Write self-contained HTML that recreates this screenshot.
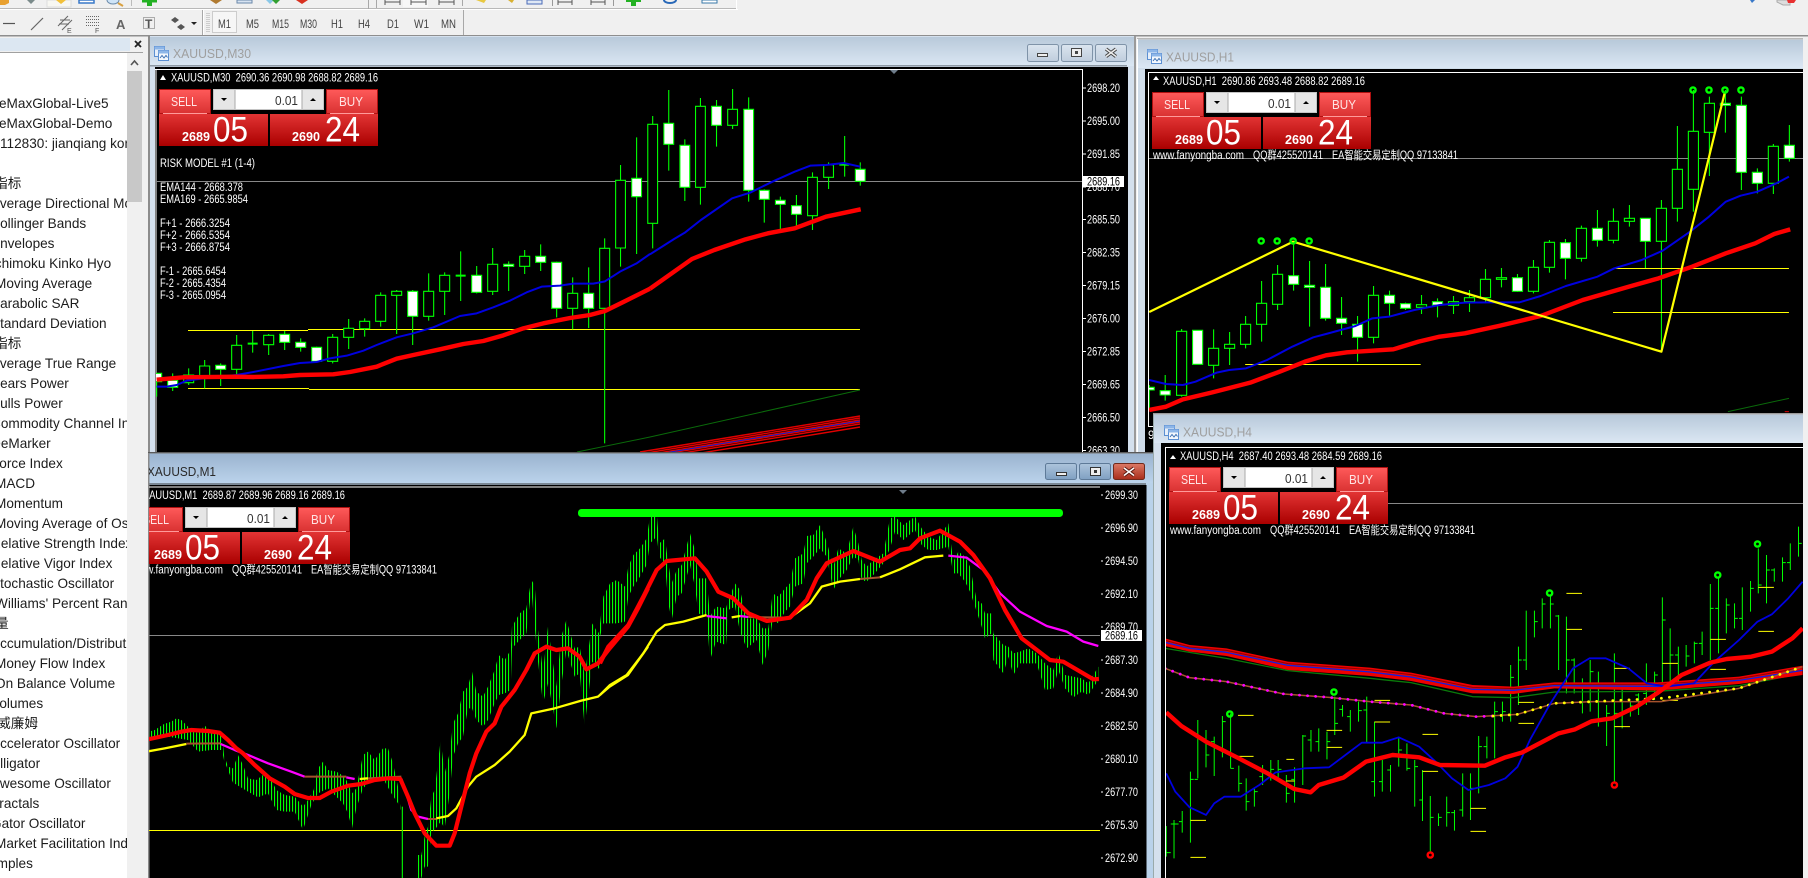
<!DOCTYPE html>
<html><head><meta charset="utf-8"><title>XAUUSD</title>
<style>
html,body{margin:0;padding:0;background:#f0f0f0;overflow:hidden;width:1808px;height:878px}
svg{display:block;font-family:"Liberation Sans","Noto Sans CJK SC",sans-serif}
path,polyline,line,rect,ellipse,polygon{vector-effect:non-scaling-stroke}
polyline{stroke-linejoin:round}
.l{font-size:13.6px;fill:#1c1c1c}
.a{font-size:11.5px;fill:#fff}
.h{font-size:11.5px;fill:#fff}
.t{font-size:13px;fill:#9f9f9f}
.tf{font-size:12px;fill:#444}
</style></head><body>
<svg width="1808" height="878" viewBox="0 0 1808 878" xmlns="http://www.w3.org/2000/svg">
<defs>
<linearGradient id="ti" x1="0" y1="0" x2="0" y2="1"><stop offset="0" stop-color="#b8c9da"/><stop offset="1" stop-color="#dbe7f3"/></linearGradient>
<linearGradient id="ta" x1="0" y1="0" x2="0" y2="1"><stop offset="0" stop-color="#9bb4d0"/><stop offset="1" stop-color="#bbd3eb"/></linearGradient>
<linearGradient id="rb" x1="0" y1="0" x2="0" y2="1"><stop offset="0" stop-color="#ff5a5a"/><stop offset="1" stop-color="#d93232"/></linearGradient>
<linearGradient id="rd" x1="0" y1="0" x2="0" y2="1"><stop offset="0" stop-color="#e23434"/><stop offset="1" stop-color="#aa0000"/></linearGradient>
<linearGradient id="bi" x1="0" y1="0" x2="0" y2="1"><stop offset="0" stop-color="#dbe5ef"/><stop offset="1" stop-color="#bfcddd"/></linearGradient>
<linearGradient id="ba" x1="0" y1="0" x2="0" y2="1"><stop offset="0" stop-color="#adc4dc"/><stop offset="1" stop-color="#7fa0c2"/></linearGradient>
<linearGradient id="bc" x1="0" y1="0" x2="0" y2="1"><stop offset="0" stop-color="#dc7a66"/><stop offset="1" stop-color="#a92d1b"/></linearGradient>
<pattern id="st" width="9" height="30" patternUnits="userSpaceOnUse"><rect width="3.3" height="30" fill="#0f0"/></pattern>
<clipPath id="cs"><rect x="0" y="53" width="127" height="825"/></clipPath>
<clipPath id="c30"><rect x="156" y="70" width="926" height="383"/></clipPath>
<clipPath id="ch1"><rect x="1149" y="73" width="654" height="340"/></clipPath>
<clipPath id="ch4"><rect x="1166" y="448" width="637" height="430"/></clipPath>
<clipPath id="cm1"><rect x="149" y="485" width="951" height="393"/></clipPath>
<clipPath id="cmt"><rect x="149" y="453" width="1000" height="425"/></clipPath>
<g id="pn">
<rect x=".5" y=".5" width="51" height="24" fill="url(#rb)" stroke="#b01010"/>
<path d="M4 24.5H48" stroke="#ff9a9a" fill="none"/>
<rect x="54.5" y=".5" width="110" height="20" fill="#e6e6e6" stroke="#c4c4c4"/>
<rect x="76" y="1" width="67" height="19" fill="#fff"/>
<path d="M76 1V20M143 1V20" stroke="#aaa" fill="none"/>
<path d="M62 9H68L65 12Z M151 12H157L154 9Z" fill="#000"/>
<rect x="167.500" y=".5" width="51" height="24" fill="url(#rb)" stroke="#b01010"/>
<path d="M171 24.5H215" stroke="#ff9a9a" fill="none"/>
<rect x="0" y="25" width="109" height="32" fill="url(#rd)"/>
<rect x="111" y="25" width="108" height="32" fill="url(#rd)"/>
</g>
<g id="ic">
<rect x=".5" y=".5" width="10" height="10" fill="#e6effa" stroke="#5b8fd2"/>
<rect x=".5" y=".5" width="10" height="3" fill="#8db6e8"/>
<rect x="4.500" y="4.500" width="10" height="10" fill="#f4f8fd" stroke="#5b8fd2"/>
<rect x="4.500" y="4.500" width="10" height="3" fill="#8db6e8"/>
<path d="M6 12L8 9.500L10 12L12 9.500L13.500 11.500" stroke="#3b6fb2" fill="none"/>
</g>
</defs>

<!-- background -->
<rect width="1808" height="878" fill="#f0f0f0"/>

<!-- toolbar row 1 (cut off) -->
<rect x="0" y="8" width="736" height="1" fill="#b8b8b8"/>
<rect x="0" y="9" width="738" height="1" fill="#fff"/>
<rect x="736" y="0" width="1" height="9" fill="#fff"/>
<path d="M0 0H9V3L5 5H0Z" fill="#e8a030"/>
<path d="M27 0H35L31 4Z" fill="#7a8a8a"/>
<rect x="47" y="0" width="24" height="7" fill="#f7f7f2" stroke="#ddd"/>
<path d="M56 0H66L61 4Z" fill="#f2c038"/>
<rect x="79" y="0" width="15" height="3" fill="#fff" stroke="#3878c8" stroke-width="1.500"/>
<ellipse cx="113" cy="0" rx="6" ry="4" fill="#cfe4f7" stroke="#6a8aaa"/>
<path d="M118 3L123 6" stroke="#d8a040" stroke-width="2" fill="none"/>
<rect x="131" y="0" width="1" height="6" fill="#bbb"/>
<rect x="147" y="0" width="5" height="6" fill="#23b123"/><rect x="142" y="0" width="15" height="2.500" fill="#23b123"/>
<path d="M210 0H222L216 4Z" fill="#b07a30"/>
<rect x="237" y="0" width="15" height="3" fill="#d8e4f2" stroke="#6a88aa"/>
<path d="M266 0H274L270 4Z" fill="#8ac8e8"/><path d="M272 0H280L276 4Z" fill="#32a032"/>
<path d="M296 0H308L302 4Z" fill="#d83020"/>
<rect x="368" y="0" width="1" height="9" fill="#a8a8a8"/>
<rect x="376" y="0" width="1" height="8" fill="#a8a8a8"/>
<path d="M385 2H400M385 0V5M400 0V5" stroke="#555" fill="none"/>
<rect x="403" y="0" width="25" height="7" fill="#f7f7f7"/>
<path d="M411 2H426M411 0V5M426 0V5M439 2H454M439 0V5M454 0V5" stroke="#555" fill="none"/>
<rect x="462" y="0" width="1" height="6" fill="#a8a8a8"/>
<path d="M476 0H486L484 3Z" fill="#e8c840"/>
<path d="M508 0H514L512 3Z" fill="#d8b030"/>
<rect x="527" y="0" width="15" height="4" fill="#dfe8f5" stroke="#4a6ab8"/>
<rect x="552" y="0" width="1" height="6" fill="#999"/>
<path d="M558 2H572M558 0V5M572 0V5M591 2H605M591 0V5M605 0V5" stroke="#555" fill="none"/>
<rect x="613" y="0" width="1" height="6" fill="#999"/>
<rect x="631" y="0" width="5" height="6" fill="#23b123"/><rect x="626" y="0" width="15" height="2" fill="#23b123"/>
<ellipse cx="670" cy="0" rx="6" ry="3" fill="none" stroke="#2868b8" stroke-width="2"/>
<rect x="702" y="0" width="15" height="3" fill="#fff" stroke="#3878a8"/>
<path d="M1750 0H1755L1752 3Z" fill="#3878c8"/>
<path d="M1777 2L1783 5H1790V0H1777Z" fill="#ddd" stroke="#aaa"/>
<path d="M1787 0H1796L1794 3H1788Z" fill="#e83030"/>

<!-- toolbar row 2 -->
<path d="M3 23.500H15" stroke="#555" stroke-width="1.200" fill="none"/>
<path d="M31 30L43 18" stroke="#666" stroke-width="1.200" fill="none"/>
<path d="M58 26L68 16M62 30L72 20M60 20H70M59 24H69" stroke="#666" fill="none"/>
<text x="67" y="33" font-size="7" fill="#555">E</text>
<path d="M86 16.500H100M86 19.500H100M86 22.500H100M86 25.500H100" stroke="#666" stroke-dasharray="1 1" fill="none"/>
<text x="95" y="33" font-size="7" fill="#555">F</text>
<text x="116" y="29" font-size="13" font-weight="bold" fill="#666">A</text>
<rect x="143.500" y="17.500" width="11" height="11" fill="none" stroke="#666" stroke-dasharray="1 1"/>
<text x="145" y="28" font-size="12" font-weight="bold" fill="#555">T</text>
<path d="M171 20L175 17L179 20L175 23ZM177 27L181 24L185 27L181 30Z" fill="#555"/>
<path d="M191 22H197L194 25Z" fill="#222"/>
<rect x="202" y="10" width="1" height="25" fill="#a8a8a8"/>
<rect x="203" y="10" width="1" height="25" fill="#fff"/>
<path d="M207 13V32M209 13V32" stroke="#aaa" stroke-dasharray="1 1" fill="none"/>
<rect x="212.500" y="11.500" width="24" height="21" fill="#f6f6f6" stroke="#ccc"/>
<text class="tf" x="218" y="28" textLength="13" lengthAdjust="spacingAndGlyphs">M1</text>
<text class="tf" x="246" y="28" textLength="13" lengthAdjust="spacingAndGlyphs">M5</text>
<text class="tf" x="272" y="28" textLength="17" lengthAdjust="spacingAndGlyphs">M15</text>
<text class="tf" x="300" y="28" textLength="17" lengthAdjust="spacingAndGlyphs">M30</text>
<text class="tf" x="331" y="28" textLength="12" lengthAdjust="spacingAndGlyphs">H1</text>
<text class="tf" x="358" y="28" textLength="12" lengthAdjust="spacingAndGlyphs">H4</text>
<text class="tf" x="387" y="28" textLength="12" lengthAdjust="spacingAndGlyphs">D1</text>
<text class="tf" x="414" y="28" textLength="15" lengthAdjust="spacingAndGlyphs">W1</text>
<text class="tf" x="441" y="28" textLength="15" lengthAdjust="spacingAndGlyphs">MN</text>
<rect x="463" y="10" width="1" height="25" fill="#a8a8a8"/>

<rect x="0" y="35" width="1808" height="1.500" fill="#8e8e8e"/>

<!-- navigator -->
<rect x="0" y="38" width="130" height="13" fill="#dce7f2"/>
<rect x="0" y="52" width="143" height="1" fill="#a0a0a0"/>
<path d="M135 41L141 47M141 41L135 47" stroke="#222" stroke-width="1.800" fill="none"/>
<rect x="0" y="53" width="127" height="825" fill="#fff"/>
<rect x="127" y="53" width="16" height="825" fill="#f0f0f0"/>
<rect x="127" y="71" width="15" height="131" fill="#c8c8c8"/>
<path d="M131 65L134.500 61L138 65" stroke="#555" stroke-width="1.600" fill="none"/>
<g clip-path="url(#cs)">
<text class="l" x="-1" y="108">eMaxGlobal-Live5</text>
<text class="l" x="-1" y="128">eMaxGlobal-Demo</text>
<text class="l" x="0" y="148">112830: jianqiang kong</text>
<text class="l" x="-33" y="188">趋势指标</text>
<text class="l" x="-9" y="208">Average Directional Movement</text>
<text class="l" x="-9" y="228">Bollinger Bands</text>
<text class="l" x="-9" y="248">Envelopes</text>
<text class="l" x="-9" y="268">Ichimoku Kinko Hyo</text>
<text class="l" x="-5" y="288">Moving Average</text>
<text class="l" x="-9" y="308">Parabolic SAR</text>
<text class="l" x="-9" y="328">Standard Deviation</text>
<text class="l" x="-33" y="348">震荡指标</text>
<text class="l" x="-9" y="368">Average True Range</text>
<text class="l" x="-9" y="388">Bears Power</text>
<text class="l" x="-9" y="408">Bulls Power</text>
<text class="l" x="-9" y="428">Commodity Channel Index</text>
<text class="l" x="-9" y="448">DeMarker</text>
<text class="l" x="-9" y="468">Force Index</text>
<text class="l" x="-5" y="488">MACD</text>
<text class="l" x="-5" y="508">Momentum</text>
<text class="l" x="-5" y="528">Moving Average of Oscillator</text>
<text class="l" x="-9" y="548">Relative Strength Index</text>
<text class="l" x="-9" y="568">Relative Vigor Index</text>
<text class="l" x="-9" y="588">Stochastic Oscillator</text>
<text class="l" x="-5" y="608">Williams' Percent Range</text>
<text class="l" x="-32" y="628">成交量</text>
<text class="l" x="-9" y="648">Accumulation/Distribution</text>
<text class="l" x="-5" y="668">Money Flow Index</text>
<text class="l" x="-5" y="688">On Balance Volume</text>
<text class="l" x="-9" y="708">Volumes</text>
<text class="l" x="-30" y="728">比尔威廉姆</text>
<text class="l" x="-9" y="748">Accelerator Oscillator</text>
<text class="l" x="-9" y="768">Alligator</text>
<text class="l" x="-9" y="788">Awesome Oscillator</text>
<text class="l" x="-9" y="808">Fractals</text>
<text class="l" x="-9" y="828">Gator Oscillator</text>
<text class="l" x="-5" y="848">Market Facilitation Index</text>
<text class="l" x="-20" y="868">Samples</text>
</g>

<!-- M30 window -->
<rect x="148" y="36" width="988" height="417" fill="#d4e0ed"/>
<rect x="148" y="36" width="2" height="417" fill="#8c8c8c"/>
<rect x="150" y="37" width="984" height="29" fill="url(#ti)"/>
<rect x="150" y="65" width="977" height="1.500" fill="#8e99a4"/>
<rect x="1134" y="36" width="2" height="417" fill="#9a9a9a"/>
<use href="#ic" x="154" y="46"/>
<text class="t" x="173" y="58" textLength="78" lengthAdjust="spacingAndGlyphs">XAUUSD,M30</text>
<rect x="1027.500" y="44.500" width="31" height="17" rx="2" fill="url(#bi)" stroke="#7f93a8"/>
<rect x="1061.500" y="44.500" width="31" height="17" rx="2" fill="url(#bi)" stroke="#7f93a8"/>
<rect x="1095.500" y="44.500" width="31" height="17" rx="2" fill="url(#bi)" stroke="#7f93a8"/>
<rect x="1037.500" y="53.500" width="10" height="3" fill="#eee" stroke="#444"/>
<rect x="1071.500" y="48.500" width="10" height="8" fill="#eee" stroke="#444"/><rect x="1075" y="51" width="3" height="3" fill="#444"/>
<path d="M1106 49L1116 56.500M1116 49L1106 56.500" stroke="#444" stroke-width="3.500" fill="none"/>
<path d="M1106 49L1116 56.500M1116 49L1106 56.500" stroke="#eee" stroke-width="1.500" fill="none"/>
<rect x="155" y="67" width="973" height="386" fill="#000"/>
<rect x="155" y="69" width="927.500" height="1" fill="#fff"/>
<rect x="155.500" y="69" width="1" height="384" fill="#fff"/>
<rect x="1082" y="69" width="1" height="384" fill="#fff"/>
<path d="M890 70H898L894 74Z" fill="#6e7c8a"/>
<path d="M156 181.500H1082" stroke="#888" fill="none"/>

<g clip-path="url(#c30)">
<path d="M188 330.500H308M308 329.500H860M188 388.500H309M309 389.500H860" stroke="#ff0" fill="none"/>
<path d="M577 452L650 437L860 390" stroke="#0a6a0a" fill="none"/>
<path d="M640 452L860 416M640 454L860 418M640 456L860 420M640 458L860 422M640 460L860 424M640 463L860 427" stroke="#e00000" stroke-width="1.400" fill="none"/>
<path d="M640 457L860 421" stroke="#1020d0" fill="none"/>
<g transform="translate(150,230) scale(.33333)">
<path d="M20 430V500M68 430V483M116 415V465M164 390V475M212 400V468M260 315V435M308 303V368M356 312V375M404 303V360M452 325V365M500 350V395M548 312V400M596 267V357M644 265V320M692 187V290M740 180V312M788 180V345M836 130V272M884 127V255M932 64V213M980 108V190M1028 54V195M1076 94V183M1124 60V132M1172 43V123M1220 95V262M1268 142V298M1316 112V294M1364 25V640" stroke="#0f0" stroke-width="1.100" fill="none"/>
<path d="M101 435H131V458H101ZM149 408H179V440H149ZM245 346H275V418H245ZM341 316H371V344H341ZM533 322H563V394H533ZM581 295H611V322H581ZM629 274H659V296H629ZM677 196H707V274H677ZM725 184H755V196H725ZM821 184H851V259H821ZM869 136H899V184H869ZM1013 103H1043V184H1013ZM1109 79H1139V109H1109ZM1253 190H1283V235H1253ZM1349 55H1379V235H1349Z" fill="#000" stroke="#0f0" stroke-width="1.100"/>
<path d="M5 430H35V455H5ZM53 451H83V472H53ZM197 406H227V418H197ZM389 313H419V337H389ZM437 337H467V352H437ZM485 352H515V394H485ZM773 184H803V259H773ZM965 136H995V187H965ZM1061 103H1091V109H1061ZM1157 79H1187V97H1157ZM1205 97H1235V235H1205ZM1301 190H1331V235H1301Z" fill="#fff" stroke="#0f0" stroke-width="1.100"/>
<path d="M293 341H323M917 137H947" stroke="#0f0" stroke-width="2" fill="none"/>
<polyline fill="none" stroke="#0000e0" stroke-width="2" points="20,470 50,470 80,465 110,452 160,445 260,435 310,426 400,408 450,399 500,396 540,385 590,377 640,362 680,345 740,322 790,310 850,292 930,258 980,250 1030,232 1080,212 1130,187 1175,170 1230,167 1270,161 1330,161 1365,154 1410,125 1460,100 1500,72"/>
<polyline fill="none" stroke="#f00" stroke-width="4.400" points="20,449 100,442 260,440 310,441 400,439 450,435 550,433 600,426 680,410 740,386 790,375 870,358 940,342 1000,333 1060,316 1120,295 1180,280 1260,264 1320,255 1365,243 1420,216 1500,176"/>
</g>
<g transform="translate(500,0) scale(.44643,.33333)">
<path d="M270 495V800M306 412V762M342 348V745M378 270V512M414 418V603M449 294V614M485 300V440M521 267V387M557 292V605M592 568V668M628 590V688M664 585V680M700 517V690M736 487V567M772 408V530M807 487V557" stroke="#0f0" stroke-width="1.100" fill="none"/>
<path d="M259 541H281V744H259ZM331 373H353V670H331ZM438 319H460V562H438ZM510 328H532V376H510ZM689 532H711V647H689ZM725 495H747V532H725Z" fill="#000" stroke="#0f0" stroke-width="1.100"/>
<path d="M295 535H317V590H295ZM367 370H389V433H367ZM403 436H425V562H403ZM474 319H496V376H474ZM546 328H568V571H546ZM581 571H603V598H581ZM617 601H639V613H617ZM653 617H675V643H653ZM796 508H818V544H796Z" fill="#fff" stroke="#0f0" stroke-width="1.100"/>
<path d="M760 494H782" stroke="#0f0" stroke-width="2" fill="none"/>
<polyline fill="none" stroke="#0000e0" stroke-width="2" points="336,763 390,717 415,697 450,660 520,595 560,578 615,542 660,515 695,497 730,495 770,489 807,500"/>
<polyline fill="none" stroke="#f00" stroke-width="4.400" points="336,866 430,777 480,750 550,718 600,700 660,685 730,650 808,628"/>
</g>
</g>

<path d="M160 80H166L163 75Z" fill="#fff"/>
<text class="h" x="171" y="81.500" textLength="207" lengthAdjust="spacingAndGlyphs" xml:space="preserve">XAUUSD,M30  2690.36 2690.98 2688.82 2689.16</text>
<use href="#pn" x="159" y="89"/>
<g transform="translate(159,89)" fill="#fff">
<text x="12" y="17" font-size="12.500" fill="#ffe4e4" textLength="26" lengthAdjust="spacingAndGlyphs">SELL</text>
<text x="116" y="16" font-size="13" fill="#333" textLength="23" lengthAdjust="spacingAndGlyphs">0.01</text>
<text x="180" y="17" font-size="12.500" fill="#ffe4e4" textLength="24" lengthAdjust="spacingAndGlyphs">BUY</text>
<text x="23" y="52" font-size="13" font-weight="bold" textLength="28" lengthAdjust="spacingAndGlyphs">2689</text>
<text x="54" y="52.500" font-size="35" textLength="35" lengthAdjust="spacingAndGlyphs">05</text>
<text x="133" y="52" font-size="13" font-weight="bold" textLength="28" lengthAdjust="spacingAndGlyphs">2690</text>
<text x="166" y="52.500" font-size="35" textLength="35" lengthAdjust="spacingAndGlyphs">24</text>
</g>
<text class="h" x="160" y="167" textLength="95" lengthAdjust="spacingAndGlyphs">RISK MODEL #1 (1-4)</text>
<text class="h" x="160" y="191" textLength="83" lengthAdjust="spacingAndGlyphs">EMA144 - 2668.378</text>
<text class="h" x="160" y="203" textLength="88" lengthAdjust="spacingAndGlyphs">EMA169 - 2665.9854</text>
<text class="h" x="160" y="227" textLength="70" lengthAdjust="spacingAndGlyphs">F+1 - 2666.3254</text>
<text class="h" x="160" y="239" textLength="70" lengthAdjust="spacingAndGlyphs">F+2 - 2666.5354</text>
<text class="h" x="160" y="251" textLength="70" lengthAdjust="spacingAndGlyphs">F+3 - 2666.8754</text>
<text class="h" x="160" y="275" textLength="66" lengthAdjust="spacingAndGlyphs">F-1 - 2665.6454</text>
<text class="h" x="160" y="287" textLength="66" lengthAdjust="spacingAndGlyphs">F-2 - 2665.4354</text>
<text class="h" x="160" y="299" textLength="66" lengthAdjust="spacingAndGlyphs">F-3 - 2665.0954</text>

<path d="M1083 88H1086M1083 121H1086M1083 154H1086M1083 187H1086M1083 219.500H1086M1083 252.500H1086M1083 285.500H1086M1083 318.500H1086M1083 351.500H1086M1083 384.500H1086M1083 417.500H1086M1083 450.500H1086" stroke="#fff" fill="none"/>
<text class="a" x="1087" y="92" textLength="33" lengthAdjust="spacingAndGlyphs">2698.20</text>
<text class="a" x="1087" y="125" textLength="33" lengthAdjust="spacingAndGlyphs">2695.00</text>
<text class="a" x="1087" y="158" textLength="33" lengthAdjust="spacingAndGlyphs">2691.85</text>
<text class="a" x="1087" y="191" textLength="33" lengthAdjust="spacingAndGlyphs">2688.70</text>
<text class="a" x="1087" y="223.500" textLength="33" lengthAdjust="spacingAndGlyphs">2685.50</text>
<text class="a" x="1087" y="256.500" textLength="33" lengthAdjust="spacingAndGlyphs">2682.35</text>
<text class="a" x="1087" y="289.500" textLength="33" lengthAdjust="spacingAndGlyphs">2679.15</text>
<text class="a" x="1087" y="322.500" textLength="33" lengthAdjust="spacingAndGlyphs">2676.00</text>
<text class="a" x="1087" y="355.500" textLength="33" lengthAdjust="spacingAndGlyphs">2672.85</text>
<text class="a" x="1087" y="388.500" textLength="33" lengthAdjust="spacingAndGlyphs">2669.65</text>
<text class="a" x="1087" y="421.500" textLength="33" lengthAdjust="spacingAndGlyphs">2666.50</text>
<text class="a" x="1087" y="454.500" textLength="33" lengthAdjust="spacingAndGlyphs">2663.30</text>
<rect x="1083" y="176" width="41" height="11" fill="#fff"/>
<text x="1087" y="185.500" font-size="11.500" fill="#000" textLength="33" lengthAdjust="spacingAndGlyphs">2689.16</text>

<!-- H1 window -->
<rect x="1137" y="38" width="666" height="415" fill="#cfdce9"/>
<rect x="1137" y="38" width="666" height="1.500" fill="#b8b8b8"/>
<rect x="1137" y="39" width="1" height="414" fill="#fff"/>
<rect x="1138" y="40" width="665" height="28" fill="url(#ti)"/>
<use href="#ic" x="1147" y="49"/>
<text class="t" x="1166" y="61.500" textLength="68" lengthAdjust="spacingAndGlyphs">XAUUSD,H1</text>
<rect x="1145" y="69" width="658" height="384" fill="#000"/>
<rect x="1148" y="72" width="655" height="1" fill="#fff"/>
<rect x="1148" y="72" width="1" height="354" fill="#fff"/>
<rect x="1148" y="426" width="6" height="1" fill="#fff"/>
<text class="h" x="1148" y="439">9</text>
<path d="M1149 158.500H1803" stroke="#888" fill="none"/>
<g clip-path="url(#ch1)">
<g transform="translate(1145,80) scale(.42088,.33333)">
<path d="M10 915V990M48 885V962M87 747V950M163 748V895M201 756V855M239 708V805M277 603V785M315 555V690M353 490V632M391 543V740M429 552V722M467 651V765M505 708V845M543 618V790M581 632V707M619 668V690M657 645V702M695 655V712M733 648V702M771 630V696M809 567V665M847 564V622M885 582V636M923 540V640M961 480V578M999 477V598M1037 437V545M1075 390V500M1113 385V490M1151 375V440M1189 415V565M1227 360V815M1265 138V425M1303 30V395M1341 50V288M1379 30V158M1417 50V330M1455 265V340M1493 192V342M1531 135V245" stroke="#0f0" stroke-width="1.100" fill="none"/>
<path d="M75 754H99V946H75ZM151 805H175V856H151ZM189 793H213V805H189ZM227 733H251V793H227ZM265 670H289V733H265ZM303 583H327V673H303ZM531 646H555V772H531ZM645 674H669V682H645ZM721 665H745V676H721ZM759 653H783V665H759ZM797 598H821V653H797ZM835 593H859V598H835ZM911 562H935V634H911ZM949 487H973V562H949ZM1025 445H1049V535H1025ZM1101 424H1125V481H1101ZM1139 415H1163V424H1139ZM1215 385H1239V484H1215ZM1253 268H1277V385H1253ZM1291 154H1315V328H1291ZM1329 70H1353V157H1329ZM1481 199H1505V310H1481Z" fill="#000" stroke="#0f0" stroke-width="1.100"/>
<path d="M-2 922H22V930H-2ZM36 932H60V945H36ZM113 751H137V853H113ZM341 587H365V613H341ZM379 616H403V622H379ZM417 622H441V715H417ZM455 715H479V730H455ZM493 733H517V772H493ZM569 646H593V670H569ZM607 671H631V685H607ZM683 665H707V675H683ZM873 593H897V634H873ZM987 488H1011V535H987ZM1063 445H1087V481H1063ZM1177 415H1201V484H1177ZM1367 70H1391V76H1367ZM1405 76H1429V277H1405ZM1443 277H1467V310H1443ZM1519 196H1543V235H1519Z" fill="#fff" stroke="#0f0" stroke-width="1.100"/>
<path d="M238 853.500H655M1112 565.500H1530M1112 697.500H1530" stroke="#ff0" stroke-width="1" fill="none"/>
<path d="M1385 995L1530 955" stroke="#0a6a0a" fill="none"/>
<path d="M1520 995H1530" stroke="#d00" fill="none"/>
<polyline fill="none" stroke="#0000e0" stroke-width="2" points="10,900 50,912 90,915 120,905 170,878 200,870 240,865 290,840 350,800 400,772 430,762 500,738 540,715 580,710 640,690 700,675 760,668 820,667 890,667 940,648 1000,618 1075,590 1115,565 1180,540 1230,512 1295,455 1340,410 1380,365 1415,347 1455,335 1500,310 1530,290"/>
<polyline fill="none" stroke="#f00" stroke-width="4.400" points="10,990 50,980 90,958 160,937 250,908 320,875 380,845 430,826 480,817 590,808 650,785 700,770 760,760 840,738 940,708 1040,660 1150,620 1220,595 1300,560 1380,520 1450,490 1495,462 1533,448"/>
<polyline fill="none" stroke="#ff0" stroke-width="2.200" points="10,696 352,485 1227,815 1378,35"/>
<g fill="none" stroke="#0f0" stroke-width="2.400">
<ellipse cx="276" cy="483" rx="6.200" ry="7.800"/><ellipse cx="314" cy="483" rx="6.200" ry="7.800"/><ellipse cx="352" cy="483" rx="6.200" ry="7.800"/><ellipse cx="390" cy="483" rx="6.200" ry="7.800"/>
<ellipse cx="1302" cy="30" rx="6.200" ry="7.800"/><ellipse cx="1340" cy="30" rx="6.200" ry="7.800"/><ellipse cx="1378" cy="30" rx="6.200" ry="7.800"/><ellipse cx="1416" cy="30" rx="6.200" ry="7.800"/>
</g>
</g>
</g>
<path d="M1153 80H1159L1156 76Z" fill="#fff"/>
<text class="h" x="1163" y="85" textLength="202" lengthAdjust="spacingAndGlyphs" xml:space="preserve">XAUUSD,H1  2690.86 2693.48 2688.82 2689.16</text>
<use href="#pn" x="1152" y="92"/>
<g transform="translate(1152,92)" fill="#fff">
<text x="12" y="17" font-size="12.500" fill="#ffe4e4" textLength="26" lengthAdjust="spacingAndGlyphs">SELL</text>
<text x="116" y="16" font-size="13" fill="#333" textLength="23" lengthAdjust="spacingAndGlyphs">0.01</text>
<text x="180" y="17" font-size="12.500" fill="#ffe4e4" textLength="24" lengthAdjust="spacingAndGlyphs">BUY</text>
<text x="23" y="52" font-size="13" font-weight="bold" textLength="28" lengthAdjust="spacingAndGlyphs">2689</text>
<text x="54" y="52.500" font-size="35" textLength="35" lengthAdjust="spacingAndGlyphs">05</text>
<text x="133" y="52" font-size="13" font-weight="bold" textLength="28" lengthAdjust="spacingAndGlyphs">2690</text>
<text x="166" y="52.500" font-size="35" textLength="35" lengthAdjust="spacingAndGlyphs">24</text>
</g>
<text class="h" x="1153" y="159" textLength="91" lengthAdjust="spacingAndGlyphs">www.fanyongba.com</text>
<text class="h" x="1253" y="159" textLength="70" lengthAdjust="spacingAndGlyphs">QQ群425520141</text>
<text class="h" x="1332" y="159" textLength="126" lengthAdjust="spacingAndGlyphs">EA智能交易定制QQ 97133841</text>

<!-- H4 window -->
<rect x="1153" y="413" width="650" height="465" fill="#d4e0ed"/>
<rect x="1153" y="413" width="650" height="1.500" fill="#9a9a9a"/>
<rect x="1154" y="415" width="649" height="28" fill="url(#ti)"/>
<rect x="1153" y="414" width="1" height="464" fill="#9aa"/>
<use href="#ic" x="1164" y="425"/>
<text class="t" x="1183" y="436.500" textLength="69" lengthAdjust="spacingAndGlyphs">XAUUSD,H4</text>
<rect x="1161" y="443" width="642" height="435" fill="#000"/>
<rect x="1165" y="447" width="638" height="1" fill="#fff"/>
<rect x="1165" y="447" width="1" height="431" fill="#fff"/>
<path d="M1388 503.500H1803" stroke="#888" fill="none"/>
<g clip-path="url(#ch4)">
<g transform="translate(1165,520) scale(.41003,.33333)">
<path d="M3 918V1010M3 998H14M22 900V1015M14 912H22M22 912H33M42 873V938M34 905H42M62 755V968M62 778H70M80 600V775M72 778H80M100 630V742M100 705H108M120 650V768M112 665H120M140 588V712M140 605H148M160 580V745M160 745H168M180 737V815M180 790H188M198 775V872M198 845H206M218 805V860M218 815H226M238 735V795M230 770H238M258 720V782M258 748H266M276 720V775M276 748H284M296 765V848M296 820H304M316 742V848M308 778H316M336 645V795M336 648H344M356 630V695M348 660H356M375 625V695M367 665H375M395 635V718M395 665H403M414 530V645M414 610H422M433 555V590M425 568H433M452 570V635M444 590H452M472 545V605M472 572H480M492 530V670M484 570H492M511 605V830M503 785H511M530 720V815M522 785H530M550 735V815M542 750H550M570 655V740M570 690H578M590 670V752M590 745H598M609 720V860M609 740H617M628 750V903M620 840H628M647 828V1000M647 892H655M667 880V918M667 892H675M687 830V920M687 878H695M706 870V932M698 878H706M726 760V890M718 870H726M745 760V900M745 805H753M765 648V820M765 680H773M785 650V715M777 680H785M804 545V715M804 575H812M823 545V605M823 575H831M843 435V605M843 472H851M862 380V555M862 420H870M881 272V450M873 420H881M901 272V352M901 305H909M920 235V325M920 252H928M940 225V325M940 252H948M960 285V450M952 288H960M979 290V520M979 420H987M998 415V520M990 420H998M1018 475V580M1010 490H1018M1037 420V575M1037 455H1045M1057 455V620M1049 495H1057M1077 555V678M1077 580H1085M1096 400V790M1096 580H1104M1115 500V625M1115 575H1123M1135 545V590M1135 558H1143M1155 520V585M1147 525H1155M1174 430V555M1166 520H1174M1194 455V540M1194 465H1202M1213 232V500M1213 300H1221M1232 325V495M1232 405H1240M1252 380V490M1244 405H1252M1271 375V440M1271 408H1279M1291 365V430M1291 370H1299M1310 335V405M1302 370H1310M1330 192V420M1330 265H1338M1350 175V400M1342 265H1350M1369 235V340M1369 255H1377M1389 250V325M1389 295H1397M1408 202V330M1400 295H1408M1428 183V275M1428 205H1436M1447 85V220M1447 195H1455M1467 105V250M1467 150H1475M1486 145V185M1478 150H1486M1506 112V185M1506 128H1514M1525 70V150M1517 128H1525M1545 20V110M1545 70H1553" stroke="#0f0" stroke-width="1" fill="none"/>
<path d="M62 901H100M62 1012H100M178 586H216M178 709H216M296 718H315M296 783H316M394 631H432M394 682H432M511 541H549M511 606H549M628 643H666M628 754H666M745 865H783M745 934H783M862 547H900M862 610H900M979 220H1017M979 328H1017M1096 445H1134M1096 620H1134M1213 430H1251M1213 541H1251M1330 358H1368M1330 448H1368M1447 202H1485M1447 334H1485" stroke="#ff0" fill="none"/>
<polyline fill="none" stroke="#0a7a0a" stroke-width="1.300" points="0,385 60,397 150,415 300,452 500,475 600,488 750,530 850,533 950,516 1200,514 1400,497 1555,460"/>
<polygon fill="#ee0000" points="0,355 60,375 150,385 300,425 500,443 600,458 750,495 850,500 950,487 1200,487 1400,470 1555,437 1555,465 1400,492 1200,512 950,505 850,522 750,520 600,483 500,468 300,450 150,408 60,395 0,378"/>
<polyline fill="none" stroke="#900000" stroke-width="1" points="0,361 60,381 150,391 300,431 500,449 600,464 750,502 850,506 950,493 1200,493 1400,476 1555,443"/>
<polyline fill="none" stroke="#1020e0" stroke-width="1.300" points="0,367 60,385 150,397 300,436 500,456 600,471 750,508 850,511 950,497 1200,499 1400,481 1555,451"/>
<polyline fill="none" stroke="#a5522d" stroke-width="1.500" points="0,445 60,473 150,485 290,522 400,532 500,545 600,555 680,580 760,590 860,583 950,550 1040,545 1210,545 1400,505 1555,440"/>
<polyline fill="none" stroke="#f0f" stroke-width="2.800" stroke-linecap="round" stroke-dasharray="0.100 8" points="0,445 60,473 150,485 290,522 400,532 500,545 600,555 680,580 760,590 800,588"/>
<polyline fill="none" stroke="#ff0" stroke-width="2.800" stroke-linecap="round" stroke-dasharray="0.100 8" points="800,588 860,583 950,550 1040,545 1210,535 1400,505 1555,440"/>
<polyline fill="none" stroke="#0000e0" stroke-width="1.800" points="3,760 25,815 60,862 100,885 120,850 145,830 185,830 230,795 270,757 340,745 400,742 440,705 480,668 530,668 570,652 620,680 660,725 700,775 740,810 790,795 830,775 860,740 890,660 940,550 995,445 1035,415 1075,415 1130,445 1175,490 1220,500 1290,490 1340,425 1400,360 1445,305 1480,283 1520,235 1555,185"/>
<polyline fill="none" stroke="#f00" stroke-width="4.400" points="3,577 40,618 100,665 180,715 250,760 315,807 355,817 375,795 435,773 490,725 555,705 620,712 670,735 780,737 830,712 870,698 960,640 1000,628 1040,604 1090,595 1150,560 1200,520 1260,465 1330,428 1370,417 1430,410 1480,395 1530,355 1555,325"/>
<g fill="none" stroke="#0f0" stroke-width="2.400">
<ellipse cx="158" cy="582" rx="6.400" ry="7.800"/><ellipse cx="412" cy="516" rx="6.400" ry="7.800"/><ellipse cx="938" cy="219" rx="6.400" ry="7.800"/><ellipse cx="1348" cy="165" rx="6.400" ry="7.800"/><ellipse cx="1445" cy="72" rx="6.400" ry="7.800"/>
</g>
<g fill="none" stroke="#f00" stroke-width="2.400">
<ellipse cx="647" cy="1005" rx="6.400" ry="7.800"/><ellipse cx="1096" cy="795" rx="6.400" ry="7.800"/>
</g>
</g>
</g>
<path d="M1170 459H1176L1173 455Z" fill="#fff"/>
<text class="h" x="1180" y="460" textLength="202" lengthAdjust="spacingAndGlyphs" xml:space="preserve">XAUUSD,H4  2687.40 2693.48 2684.59 2689.16</text>
<use href="#pn" x="1169" y="467"/>
<g transform="translate(1169,467)" fill="#fff">
<text x="12" y="17" font-size="12.500" fill="#ffe4e4" textLength="26" lengthAdjust="spacingAndGlyphs">SELL</text>
<text x="116" y="16" font-size="13" fill="#333" textLength="23" lengthAdjust="spacingAndGlyphs">0.01</text>
<text x="180" y="17" font-size="12.500" fill="#ffe4e4" textLength="24" lengthAdjust="spacingAndGlyphs">BUY</text>
<text x="23" y="52" font-size="13" font-weight="bold" textLength="28" lengthAdjust="spacingAndGlyphs">2689</text>
<text x="54" y="52.500" font-size="35" textLength="35" lengthAdjust="spacingAndGlyphs">05</text>
<text x="133" y="52" font-size="13" font-weight="bold" textLength="28" lengthAdjust="spacingAndGlyphs">2690</text>
<text x="166" y="52.500" font-size="35" textLength="35" lengthAdjust="spacingAndGlyphs">24</text>
</g>
<text class="h" x="1170" y="534" textLength="91" lengthAdjust="spacingAndGlyphs">www.fanyongba.com</text>
<text class="h" x="1270" y="534" textLength="70" lengthAdjust="spacingAndGlyphs">QQ群425520141</text>
<text class="h" x="1349" y="534" textLength="126" lengthAdjust="spacingAndGlyphs">EA智能交易定制QQ 97133841</text>

<!-- M1 window (active) -->
<rect x="148" y="453" width="1005" height="425" fill="#b9d2ea"/>
<rect x="148" y="452" width="1005" height="1.500" fill="#5a5a5a"/>
<rect x="149" y="454" width="1004" height="29" fill="url(#ta)"/>
<rect x="149" y="483" width="997" height="2" fill="#7a8794"/>
<rect x="148" y="453" width="1.500" height="425" fill="#8a8a8a"/>
<g clip-path="url(#cmt)">
<text x="147" y="476" font-size="13" fill="#2a2a2a" textLength="69" lengthAdjust="spacingAndGlyphs">XAUUSD,M1</text>
</g>
<rect x="1045.500" y="463.500" width="31" height="16" rx="2" fill="url(#ba)" stroke="#5e7a98"/>
<rect x="1079.500" y="463.500" width="31" height="16" rx="2" fill="url(#ba)" stroke="#5e7a98"/>
<rect x="1113.500" y="463.500" width="31" height="16" rx="2" fill="url(#bc)" stroke="#702a1c"/>
<rect x="1056.500" y="472.500" width="10" height="3" fill="#eee" stroke="#333"/>
<rect x="1090.500" y="467.500" width="10" height="8" fill="#eee" stroke="#333"/><rect x="1094" y="470" width="3" height="3" fill="#333"/>
<path d="M1124 468L1134 475.500M1134 468L1124 475.500" stroke="#5a1a10" stroke-width="3.500" fill="none"/>
<path d="M1124 468L1134 475.500M1134 468L1124 475.500" stroke="#fff" stroke-width="1.500" fill="none"/>
<rect x="149.500" y="485" width="997" height="393" fill="#000"/>
<rect x="149" y="486.500" width="951" height="1" fill="#fff"/>
<path d="M899 490H907L903 494Z" fill="#6e7c8a"/>
<path d="M149 635.500H1100" stroke="#888" fill="none"/>
<path d="M149 830.500H1100" stroke="#ff0" fill="none"/>
<g clip-path="url(#cm1)">
<g transform="translate(148,580) scale(.33333)">
<polygon fill="url(#st)" points="3,455 20,450 48,432 70,425 85,415 100,420 115,435 130,450 150,460 170,437 185,450 200,455 222,465 228,525 240,560 255,565 270,525 285,555 300,595 325,600 345,585 365,590 385,630 410,645 440,650 465,680 480,660 497,630 510,565 525,545 540,570 565,575 590,590 600,610 612,640 625,625 645,525 660,515 680,540 705,505 720,505 735,550 750,620 757,680 757,690 750,670 730,640 705,595 680,590 645,625 625,685 612,745 600,700 585,670 540,625 510,640 490,675 465,750 440,695 410,695 385,690 360,640 330,652 300,635 255,608 228,540 222,510 190,510 150,515 120,480 60,470 3,480"/>
<path d="M763 680V894" stroke="#0f0" stroke-width="1.100" fill="none"/>
<polygon fill="url(#st)" points="805,825 820,825 830,770 840,740 850,650 860,630 878,480 890,580 905,520 915,430 930,400 945,335 960,320 972,275 985,335 1005,350 1020,320 1040,270 1052,225 1070,240 1088,210 1092,140 1115,100 1135,85 1150,0 1160,15 1170,150 1185,275 1200,140 1215,250 1225,320 1240,170 1255,120 1280,205 1295,200 1310,285 1333,130 1350,160 1356,150 1356,265 1350,265 1333,245 1310,440 1295,280 1280,290 1255,210 1240,315 1225,445 1215,385 1200,310 1185,370 1170,245 1160,140 1150,30 1135,160 1115,180 1092,205 1088,330 1070,340 1052,345 1040,370 1020,420 1005,440 985,420 972,385 960,385 945,470 930,490 915,530 905,640 890,745 878,725 860,750 850,755 840,860 830,860 820,894 805,894"/>
<polyline fill="none" stroke="#ff0" stroke-width="2.300" points="0,514 50,505 115,492"/>
<polyline fill="none" stroke="#a5522d" stroke-width="2" points="115,491 218,490"/>
<polyline fill="none" stroke="#f0f" stroke-width="2.300" points="218,492 260,510 300,525 360,550 430,575 470,590"/>
<polyline fill="none" stroke="#a5522d" stroke-width="2" points="470,590 595,590"/>
<polyline fill="none" stroke="#f0f" stroke-width="2.300" points="595,592 620,597"/>
<polyline fill="none" stroke="#ff0" stroke-width="2.300" points="635,597 660,595"/>
<polyline fill="none" stroke="#a5522d" stroke-width="2" points="660,595 760,590"/>
<polyline fill="none" stroke="#f0f" stroke-width="2.300" points="760,597 775,640 790,690 810,710 840,717"/>
<polyline fill="none" stroke="#a5522d" stroke-width="2" points="840,717 865,717"/>
<polyline fill="none" stroke="#ff0" stroke-width="2.300" points="865,715 900,708 925,685 960,620 985,590 1040,555 1085,515 1130,465 1150,400 1220,385 1300,362 1350,350 1385,320 1440,285 1500,200"/>
<polyline fill="none" stroke="#f00" stroke-width="4.200" points="0,478 60,465 100,455 130,450 180,453 215,458 240,480 265,505 285,520 320,555 365,595 410,620 440,642 480,654 515,654 550,635 600,617 640,612 680,600 720,595 757,597 780,650 800,700 830,760 865,797 905,797 920,760 940,680 965,580 985,520 1015,455 1040,430 1060,380 1100,330 1135,270 1160,220 1195,200 1225,210 1260,205 1295,230 1315,268 1350,250 1385,205 1440,140 1470,85 1500,25"/>
</g>
<g transform="translate(600,490) scale(.33333)">
<polygon fill="url(#st)" points="0,400 10,320 30,280 50,270 75,290 85,230 100,195 120,175 140,145 150,80 170,70 178,160 195,145 205,220 215,280 230,240 245,225 270,130 285,180 295,265 320,265 330,380 348,350 378,355 385,330 405,280 420,300 440,385 470,385 488,415 505,415 518,310 535,320 555,295 570,280 585,205 610,190 620,138 640,135 660,105 680,155 700,230 715,175 740,190 760,110 775,160 785,210 800,230 820,210 850,190 870,85 885,80 910,105 945,80 965,115 985,140 1010,150 1045,100 1060,215 1075,185 1095,200 1110,230 1130,330 1145,340 1155,370 1175,370 1180,430 1210,465 1225,470 1240,490 1260,485 1285,475 1310,490 1335,520 1360,540 1375,487 1395,555 1420,560 1445,565 1465,580 1495,530 1495,570 1465,615 1445,605 1420,622 1395,595 1375,540 1360,595 1335,600 1310,520 1285,520 1260,520 1240,555 1225,500 1210,550 1180,510 1175,430 1155,445 1145,410 1130,365 1110,305 1095,275 1075,250 1060,250 1045,170 1010,180 985,180 965,165 945,120 910,150 885,125 870,175 850,220 820,255 800,275 785,270 775,210 760,200 740,240 715,270 700,300 680,200 660,175 640,200 620,220 610,280 585,290 570,350 555,365 535,400 518,390 505,480 488,525 470,450 440,475 420,425 405,350 385,360 378,465 348,455 330,510 320,380 295,370 285,290 270,225 245,310 230,320 215,390 205,340 195,225 178,200 170,140 150,160 140,225 120,260 100,290 85,320 75,395 50,400 30,400 10,400 0,440"/>
<polyline fill="none" stroke="#ff0" stroke-width="2.300" points="0,615 30,585 80,555 130,490 170,425 195,405 250,395 320,375"/>
<polyline fill="none" stroke="#f0f" stroke-width="2.300" points="320,378 380,385"/>
<polyline fill="none" stroke="#ff0" stroke-width="2.300" points="395,382 420,378"/>
<polyline fill="none" stroke="#f0f" stroke-width="2.300" points="420,378 445,381"/>
<polyline fill="none" stroke="#a5522d" stroke-width="2" points="445,381 570,383"/>
<polyline fill="none" stroke="#ff0" stroke-width="2.300" points="570,383 630,340 665,290 720,275 780,267"/>
<polyline fill="none" stroke="#a5522d" stroke-width="2" points="780,267 840,262"/>
<polyline fill="none" stroke="#ff0" stroke-width="2.300" points="840,262 900,238 975,202 1030,197"/>
<polyline fill="none" stroke="#f0f" stroke-width="2.300" points="1045,197 1100,203 1150,240 1200,310 1260,365 1340,408 1400,425 1450,455 1495,468"/>
<polyline fill="none" stroke="#f00" stroke-width="4.200" points="0,520 25,470 85,405 130,320 170,240 200,213 285,205 320,245 355,305 400,325 445,370 500,393 570,383 620,330 650,265 680,220 760,183 840,215 900,180 930,175 960,145 1020,122 1080,155 1120,195 1170,265 1215,360 1265,445 1350,510 1390,515 1480,568 1497,567"/>
</g>
</g>
<rect x="578" y="509" width="485" height="8" rx="3.500" fill="#0f0"/>

<g clip-path="url(#cmt)">
<text class="h" x="143" y="499" textLength="202" lengthAdjust="spacingAndGlyphs" xml:space="preserve">XAUUSD,M1  2689.87 2689.96 2689.16 2689.16</text>
<use href="#pn" x="131" y="507"/>
<g transform="translate(131,507)" fill="#fff">
<text x="12" y="17" font-size="12.500" fill="#ffe4e4" textLength="26" lengthAdjust="spacingAndGlyphs">SELL</text>
<text x="116" y="16" font-size="13" fill="#333" textLength="23" lengthAdjust="spacingAndGlyphs">0.01</text>
<text x="180" y="17" font-size="12.500" fill="#ffe4e4" textLength="24" lengthAdjust="spacingAndGlyphs">BUY</text>
<text x="23" y="52" font-size="13" font-weight="bold" textLength="28" lengthAdjust="spacingAndGlyphs">2689</text>
<text x="54" y="52.500" font-size="35" textLength="35" lengthAdjust="spacingAndGlyphs">05</text>
<text x="133" y="52" font-size="13" font-weight="bold" textLength="28" lengthAdjust="spacingAndGlyphs">2690</text>
<text x="166" y="52.500" font-size="35" textLength="35" lengthAdjust="spacingAndGlyphs">24</text>
</g>
<text class="h" x="132" y="573.500" textLength="91" lengthAdjust="spacingAndGlyphs">www.fanyongba.com</text>
<text class="h" x="232" y="573.500" textLength="70" lengthAdjust="spacingAndGlyphs">QQ群425520141</text>
<text class="h" x="311" y="573.500" textLength="126" lengthAdjust="spacingAndGlyphs">EA智能交易定制QQ 97133841</text>
</g>

<path d="M1101 495H1103M1101 528H1103M1101 561H1103M1101 594H1103M1101 627H1103M1101 660H1103M1101 693H1103M1101 726H1103M1101 759H1103M1101 792H1103M1101 825H1103M1101 858H1103" stroke="#fff" fill="none"/>
<text class="a" x="1105" y="499" textLength="33" lengthAdjust="spacingAndGlyphs">2699.30</text>
<text class="a" x="1105" y="532" textLength="33" lengthAdjust="spacingAndGlyphs">2696.90</text>
<text class="a" x="1105" y="565" textLength="33" lengthAdjust="spacingAndGlyphs">2694.50</text>
<text class="a" x="1105" y="598" textLength="33" lengthAdjust="spacingAndGlyphs">2692.10</text>
<text class="a" x="1105" y="631" textLength="33" lengthAdjust="spacingAndGlyphs">2689.70</text>
<text class="a" x="1105" y="664" textLength="33" lengthAdjust="spacingAndGlyphs">2687.30</text>
<text class="a" x="1105" y="697" textLength="33" lengthAdjust="spacingAndGlyphs">2684.90</text>
<text class="a" x="1105" y="730" textLength="33" lengthAdjust="spacingAndGlyphs">2682.50</text>
<text class="a" x="1105" y="763" textLength="33" lengthAdjust="spacingAndGlyphs">2680.10</text>
<text class="a" x="1105" y="796" textLength="33" lengthAdjust="spacingAndGlyphs">2677.70</text>
<text class="a" x="1105" y="829" textLength="33" lengthAdjust="spacingAndGlyphs">2675.30</text>
<text class="a" x="1105" y="862" textLength="33" lengthAdjust="spacingAndGlyphs">2672.90</text>
<rect x="1101" y="630" width="41" height="11" fill="#fff"/>
<text x="1105" y="639.500" font-size="11.500" fill="#000" textLength="33" lengthAdjust="spacingAndGlyphs">2689.16</text>
</svg>
</body></html>
